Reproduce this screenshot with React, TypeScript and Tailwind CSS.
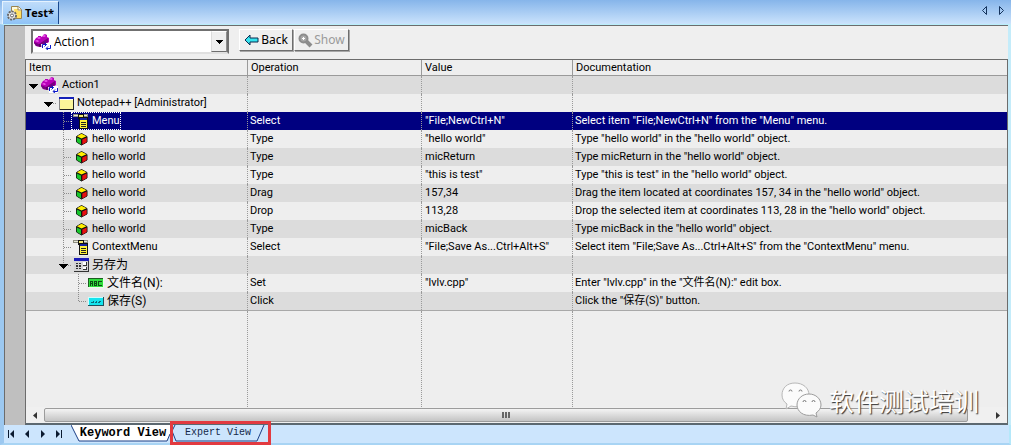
import type { ReactNode } from "react";

type Row = {
  level: number;
  icon: ReactNode;
  item: string;
  open?: boolean;
  last?: boolean;
  operation?: string;
  value?: string;
  doc?: string;
  selected?: boolean;
};

const ActionIcon = () => (
  <svg width="18" height="16" viewBox="0 0 18 16" className="shrink-0">
    <path d="M0 7l2-3 2-1V2h3v1l2-1V1l2-1 2 1v2l2 1v4l-8 5-5-1-2-3z" fill="#b800b8" />
    <path d="M0 8l5 2 9-6v4l-7 5-5-1-2-3z" fill="#780080" />
    <path d="M3 4l2-1 2 1-2 1zM8 2l2-1 2 1-2 1zM1 7l2-1 2 1-1 1z" fill="#f060f0" />
    <path d="M6 10v3" stroke="#400048" />
    <path d="M7 10h4V9h6v7H8z" fill="#fff" />
    <path d="M8.500 14v-3.500h4M10.500 8.500l2 2-2 2M16.500 11v3.500h-4M14 12.500l-2 2 2 1.500" fill="none" stroke="#0a18c8" />
  </svg>
);

const WindowIcon = () => (
  <svg width="18" height="16" viewBox="0 0 18 16" shapeRendering="crispEdges" className="shrink-0">
    <path d="M3 2h15v13H3z" fill="#222" />
    <path d="M3 2h14v12H3z" fill="#fff" />
    <path d="M4 5h13v9H4z" fill="#fbf59a" />
    <path d="M3 2h15v2H3z" fill="#1420b8" />
    <path d="M3.500 4v11" stroke="#888" />
  </svg>
);

const MenuIcon = () => (
  <svg width="18" height="16" viewBox="0 0 18 16" shapeRendering="crispEdges" className="shrink-0">
    <path d="M2 1h15v3H2z" fill="#8c8c80" />
    <path d="M3 2h4v1H3zM13 2h3v1h-3z" fill="#e8e8d8" />
    <path d="M7 1h6v4H7z" fill="#111" />
    <path d="M8 2h4v2H8z" fill="#f4e870" />
    <path d="M7 4h10v12H8V6H7z" fill="#111" />
    <path d="M9 5h7v10H9z" fill="#fff23a" />
    <path d="M9 5h7v2H9z" fill="#1420a0" />
    <path d="M10 9.500h5M10 11.500h5M10 13.500h5" stroke="#222" />
  </svg>
);

const CubeIcon = () => (
  <svg width="18" height="16" viewBox="0 0 18 16" className="shrink-0">
    <path d="M10.500 2.500l5.500 3v5.500l-5.500 3-5-3V5.500z" fill="#111" stroke="#111" />
    <path d="M6 5.300L10.500 2.800 15.500 5.300 10.500 7.500z" fill="#ffee00" />
    <path d="M5.800 6.500L10 8.500v5l-4.200-2.500z" fill="#17c52c" />
    <path d="M15.700 6.500L11.300 8.500v5l4.400-2.500z" fill="#e81010" />
  </svg>
);

const DialogIcon = () => (
  <svg width="18" height="16" viewBox="0 0 18 16" shapeRendering="crispEdges" className="shrink-0">
    <path d="M3 1h15v14H3z" fill="#333" />
    <path d="M3 1h14v13H3z" fill="#d4d4d4" />
    <path d="M3 1h15v3H3z" fill="#1c1cb8" />
    <path d="M5 6h2v1H5zM8 6h2v1H8zM5 8h2v2H5zM8 8h2v2H8zM5 11h2v1H5zM8 11h2v1H8zM12 5h4v4h-4zM12 10h4v3h-4z" fill="#333" />
    <path d="M12 5h3v3h-3zM12 10h3v2h-3z" fill="#fff" />
  </svg>
);

const EditIcon = () => (
  <svg width="18" height="16" viewBox="0 0 18 16" shapeRendering="crispEdges" className="shrink-0">
    <path d="M2 3h16v10H2z" fill="#e8ffe8" />
    <path d="M2 3h15v9H2z" fill="#1d5c20" />
    <path d="M3 4h14v8H3z" fill="#2fdc3c" />
    <path
      d="M4 6h3v5H6V9H5v2H4zM5 7v1h1V7zM8 6h3v5H8zM9 7v1h1V7zM9 9v1h1V9zM12 6h4v1h-3v3h3v1h-4z"
      fill="#0c4a14"
      fillRule="evenodd"
    />
  </svg>
);

const PushIcon = () => (
  <svg width="18" height="16" viewBox="0 0 18 16" shapeRendering="crispEdges" className="shrink-0">
    <path d="M2 4h16v9H2z" fill="#20505c" />
    <path d="M2 4h15v8H2z" fill="#c8ffff" />
    <path d="M3 5h14v7H3z" fill="#14e4ee" />
    <path d="M5 9h2V8h1v1h2V8h1v1h2V8h2v1h-1v1h-2V9h-1v1H9V9H8v1H5z" fill="#0a6c7c" />
  </svg>
);

const cube = <CubeIcon />;

const rows: Row[] = [
  { level: 0, icon: <ActionIcon />, item: "Action1", open: true },
  { level: 1, icon: <WindowIcon />, item: "Notepad++ [Administrator]", open: true },
  {
    level: 2,
    icon: <MenuIcon />,
    item: "Menu",
    operation: "Select",
    value: '"File;NewCtrl+N"',
    doc: 'Select item "File;NewCtrl+N" from the "Menu" menu.',
    selected: true,
  },
  { level: 2, icon: cube, item: "hello world", operation: "Type", value: '"hello world"', doc: 'Type "hello world" in the "hello world" object.' },
  { level: 2, icon: cube, item: "hello world", operation: "Type", value: "micReturn", doc: 'Type micReturn in the "hello world" object.' },
  { level: 2, icon: cube, item: "hello world", operation: "Type", value: '"this is test"', doc: 'Type "this is test" in the "hello world" object.' },
  { level: 2, icon: cube, item: "hello world", operation: "Drag", value: "157,34", doc: 'Drag the item located at coordinates 157, 34 in the "hello world" object.' },
  { level: 2, icon: cube, item: "hello world", operation: "Drop", value: "113,28", doc: 'Drop the selected item at coordinates 113, 28 in the "hello world" object.' },
  { level: 2, icon: cube, item: "hello world", operation: "Type", value: "micBack", doc: 'Type micBack in the "hello world" object.' },
  {
    level: 2,
    icon: <MenuIcon />,
    item: "ContextMenu",
    operation: "Select",
    value: '"File;Save As...Ctrl+Alt+S"',
    doc: 'Select item "File;Save As...Ctrl+Alt+S" from the "ContextMenu" menu.',
  },
  { level: 2, icon: <DialogIcon />, item: "另存为", open: true, last: true },
  { level: 3, icon: <EditIcon />, item: "文件名(N):", operation: "Set", value: '"lvlv.cpp"', doc: 'Enter "lvlv.cpp" in the "文件名(N):" edit box.' },
  { level: 3, icon: <PushIcon />, item: "保存(S)", operation: "Click", doc: 'Click the "保存(S)" button.', last: true },
];

const indents = ["pl-0", "pl-[15px]", "pl-[30px]", "pl-[45px]"];

const Branch = ({ row }: { row: Row }) => (
  <svg width="15" height="18" viewBox="0 0 15 18" shapeRendering="crispEdges" className="shrink-0">
    {row.level > 1 && (
      <path d={row.last ? "M7.500 0V9" : "M7.500 0V18"} stroke="#8c8c8c" strokeDasharray="1 1" />
    )}
    {row.level > 0 && <path d="M8 9.500h7" stroke="#8c8c8c" strokeDasharray="1 1" />}
    {row.open && <path d="M3 8h9v1h-1v1h-1v1h-1v1h-1v1h-1v-1h-1v-1h-1v-1h-1v-1h-1z" fill="#000" />}
  </svg>
);

const navIcons = [
  { label: "First", d: "M1 0h1v8H1zM7 0v8L3 4z" },
  { label: "Previous", d: "M6 0v8L2 4z" },
  { label: "Next", d: "M2 0v8l4-4z" },
  { label: "Last", d: "M1 0v8l4-4zM6 0h1v8H6z" },
];

const toolButton =
  "flex h-[22px] items-center justify-center border border-t-white border-l-white border-r-[#6e6e6e] border-b-[#6e6e6e] bg-[#efefef] text-[12px] shadow-[1px_1px_0_#a8a8a8]";

const App = () => {
  return (
    <div className="relative flex h-screen flex-col overflow-hidden bg-[#cce5fd] font-[Roboto,'Noto_Sans_CJK_SC',sans-serif] text-[11px] text-black">
      <header className="flex h-6 shrink-0 items-end justify-between bg-linear-to-b from-[#86b5ea] to-[#cbe3fc] pl-[2px]">
        <button className="flex h-[23px] w-[57px] items-center gap-[2px] border-t border-r border-l border-t-[#e4f2ff] border-l-[#e4f2ff] border-r-[#1b4a8f] bg-linear-to-b from-[#bfdcfa] to-[#8fc3f6] pl-1 font-['Open_Sans',sans-serif] text-[11px] font-bold">
          <svg width="16" height="16" viewBox="0 0 16 16" className="shrink-0">
            <path d="M4.500 1.500h7l3 3v9h-10z" fill="#fffbe0" stroke="#9a8450" />
            <path d="M7 4h4v2h3v7H8z" fill="#ffdf60" />
            <path d="M11 1.500V5h3.500" fill="#fff" stroke="#9a8450" />
            <circle cx="5" cy="10.500" r="4" fill="#d8d8d8" stroke="#666" strokeDasharray="2 1" strokeWidth="2" />
            <circle cx="5" cy="10.500" r="3" fill="#e4e4e4" />
            <circle cx="5" cy="10.500" r="1.500" fill="#fff" stroke="#666" />
          </svg>
          Test*
        </button>
        <div className="flex h-full items-center gap-2 pr-[6px] pb-[3px]">
          <button aria-label="Scroll tabs left">
            <svg width="8" height="9" viewBox="0 0 8 9">
              <path d="M5.500 .5v8L1.500 4.500z" fill="none" stroke="#14335c" />
            </svg>
          </button>
          <button aria-label="Scroll tabs right">
            <svg width="8" height="9" viewBox="0 0 8 9">
              <path d="M2.500 .5v8l4-4z" fill="none" stroke="#14335c" />
            </svg>
          </button>
        </div>
      </header>

      <div className="flex min-h-0 flex-1 border-t border-r-3 border-l-4 border-t-[#b9eefa] border-r-[#c4ecfa] border-l-[#9cc8f0]">
        <div className="flex min-w-0 flex-1 border-t border-l border-[#6c6c6c]">
          <div className="w-5 shrink-0 bg-[#bfbfbf]" />
          <main className="flex min-w-0 flex-1 flex-col bg-[#efefef]">
            <div className="flex h-[33px] shrink-0 items-start pt-[3px] pl-[6px]">
              <div className="relative mr-[10px] h-[25px] w-[198px] border-2 border-t-[#707070] border-r-[#707070] border-b-[#e0e0e0] border-l-[#707070] bg-white">
                <select
                  aria-label="Action"
                  className="block h-full w-full appearance-none bg-transparent pl-[21px] font-['Open_Sans',sans-serif] text-[12px] outline-none"
                >
                  <option>Action1</option>
                </select>
                <div className="pointer-events-none absolute top-[3px] left-px">
                  <ActionIcon />
                </div>
                <div className="pointer-events-none absolute top-0 right-0 flex h-full w-4 items-center justify-center border border-t-white border-r-[#8e8e8e] border-b-[#6e6e6e] border-l-[#dcdcdc] bg-[#efefef]">
                  <svg width="7" height="4" viewBox="0 0 7 4" shapeRendering="crispEdges">
                    <path d="M0 0h7L3.500 4z" />
                  </svg>
                </div>
              </div>
              <button className={`${toolButton} w-[54px] gap-[2px] font-['Noto_Sans',sans-serif]`}>
                <svg width="15" height="12" viewBox="0 0 15 12">
                  <path d="M1 6l5-5v3h8v4H6v3z" fill="#35e4ee" stroke="#0b2a50" />
                </svg>
                Back
              </button>
              <button className={`${toolButton} ml-px w-[55px] gap-px font-['Noto_Sans',sans-serif] text-[#9a9a9a]`}>
                <svg width="15" height="15" viewBox="0 0 15 15">
                  <path d="M8 8l5 5" stroke="#8c8c8c" strokeWidth="4" />
                  <circle cx="5.500" cy="5.500" r="4" fill="#a8a8a8" stroke="#8c8c8c" strokeWidth="2" />
                  <path d="M4 5.500h3M5.500 4v3" stroke="#fff" />
                </svg>
                Show
              </button>
            </div>

            <div className="flex min-h-0 flex-1 flex-col border-t border-r border-b-2 border-l border-t-[#6c6c6c] border-r-[#6c6c6c] border-b-[#5c6870] border-l-[#6c6c6c] bg-[#eeeeee]">
              <div className="flex min-h-0 flex-1 flex-col">
                <table className="w-full table-fixed border-separate border-spacing-0">
                  <colgroup>
                    <col className="w-[222px]" />
                    <col className="w-[174px]" />
                    <col className="w-[151px]" />
                    <col />
                  </colgroup>
                  <thead>
                    <tr className="h-4 leading-[15px]">
                      {["Item", "Operation", "Value", "Documentation"].map((h) => (
                        <th
                          key={h}
                          className="border-r border-b border-[#9a9a9a] p-0 pl-[3px] text-left font-normal last:border-r-0"
                        >
                          {h}
                        </th>
                      ))}
                    </tr>
                  </thead>
                  <tbody>
                    {rows.map((row, i) => (
                      <tr
                        key={i}
                        className={`h-[18px] leading-[18px] whitespace-nowrap ${
                          row.selected ? "bg-[#000080] text-white" : i % 2 === 0 ? "bg-[#dcdcdc]" : "bg-[#eeeeee]"
                        }`}
                      >
                        <td className="border-r border-dotted border-[#9a9a9a] p-0">
                          <div className={`flex h-[18px] items-center ${indents[row.level]}`}>
                            <Branch row={row} />
                            <span
                              className={`flex h-[18px] items-center gap-[3px] pr-px ${
                                row.selected ? "outline outline-dotted -outline-offset-1 outline-white" : ""
                              }`}
                            >
                              {row.icon}
                              <span className={/[\u4e00-\u9fff]/.test(row.item) ? "text-[12px]" : ""}>{row.item}</span>
                            </span>
                          </div>
                        </td>
                        <td className="border-r border-dotted border-[#9a9a9a] p-0 pl-[2px]">{row.operation}</td>
                        <td className="border-r border-dotted border-[#9a9a9a] p-0 pl-[3px]">{row.value}</td>
                        <td className="p-0 pl-[2px]">{row.doc}</td>
                      </tr>
                    ))}
                  </tbody>
                </table>
                {/* column rules carried on below the last step */}
                <div className="flex flex-1 border-t border-[#a8a8a8]">
                  <div className="w-[222px] border-r border-dotted border-r-[#9a9a9a]" />
                  <div className="w-[174px] border-r border-dotted border-r-[#9a9a9a]" />
                  <div className="w-[151px] border-r border-dotted border-r-[#9a9a9a]" />
                </div>
              </div>

              <div className="flex h-4 shrink-0 items-center bg-[#f0f0f0]">
                <button aria-label="Scroll left" className="flex w-[18px] justify-center">
                  <svg width="4" height="7" viewBox="0 0 4 7">
                    <path d="M4 0v7L0 3.500z" fill="#333" />
                  </svg>
                </button>
                <div className="mr-[21px] flex h-[14px] flex-1 items-center justify-center gap-px rounded-xs border border-[#9c9c9c] bg-linear-to-b from-[#f4f4f4] to-[#c4c4c4]">
                  <span className="h-[6px] w-[2px] bg-[#666]" />
                  <span className="h-[6px] w-[2px] bg-[#666]" />
                  <span className="h-[6px] w-[2px] bg-[#666]" />
                </div>
                <button aria-label="Scroll right" className="flex w-[18px] justify-center">
                  <svg width="4" height="7" viewBox="0 0 4 7">
                    <path d="M0 0v7l4-3.500z" fill="#333" />
                  </svg>
                </button>
              </div>
            </div>
          </main>
        </div>
      </div>

      <footer className="flex h-5 shrink-0 border-r-2 border-b-2 border-l-4 border-r-[#b4e8fa] border-b-[#a8d4f4] border-l-[#9cc8f0] font-['Liberation_Mono',monospace]">
        <div className="flex items-center gap-2 pl-[3px]">
          {navIcons.map((n) => (
            <button key={n.label} aria-label={n.label}>
              <svg width="8" height="8" viewBox="0 0 8 8">
                <path d={n.d} fill="#0a1a30" />
              </svg>
            </button>
          ))}
        </div>
        <button className="relative ml-2 h-4 w-[100px] text-[12px] leading-4 font-bold">
          <svg className="absolute inset-0" width="100" height="17" viewBox="0 0 100 17">
            <path d="M0 0l8 16h88l4-10V0z" fill="#fff" />
            <path d="M0 0l8 16h88l3-7" fill="none" stroke="#1b3f86" />
          </svg>
          <span className="relative pl-1">Keyword View</span>
        </button>
        <button className="relative h-4 w-[94px] text-[10px] leading-4 text-[#14294a]">
          <svg className="absolute inset-0" width="94" height="17" viewBox="0 0 94 17">
            <path d="M4 0L1 6l4 10h81l7-16" fill="none" stroke="#1b3f86" />
          </svg>
          <span className="relative">Expert View</span>
        </button>
      </footer>

      <div className="pointer-events-none absolute bottom-0 left-[170px] h-6 w-[101px] border-3 border-[#e23a40]" />

      <div className="pointer-events-none absolute right-8 bottom-[27px] flex items-center gap-[7px] font-['Noto_Sans_CJK_SC',sans-serif] text-[25px] leading-9 text-white [text-shadow:1px_1px_1px_#333]">
        <svg width="41" height="36" viewBox="0 0 41 36">
          <path d="M14 1C6 1 1 6 1 13c0 4 2 7 5 9l-1 5 5-3c11 3 18-3 18-11C28 6 22 1 14 1z" fill="#fbfbfb" stroke="#b8b8b8" />
          <path d="M28 12c-7 0-12 5-12 11s6 12 16 10l4 2-1-4c3-2 5-5 5-8 0-6-5-11-12-11z" fill="#fbfbfb" stroke="#9c9c9c" />
          <path d="M8 9.500a1.500 1.500 0 013 0M18 9.500a1.500 1.500 0 013 0M22 20a1.500 1.500 0 013 0M31 20a1.500 1.500 0 013 0" fill="none" stroke="#777" />
        </svg>
        软件测试培训
      </div>
    </div>
  );
};

export default App;
